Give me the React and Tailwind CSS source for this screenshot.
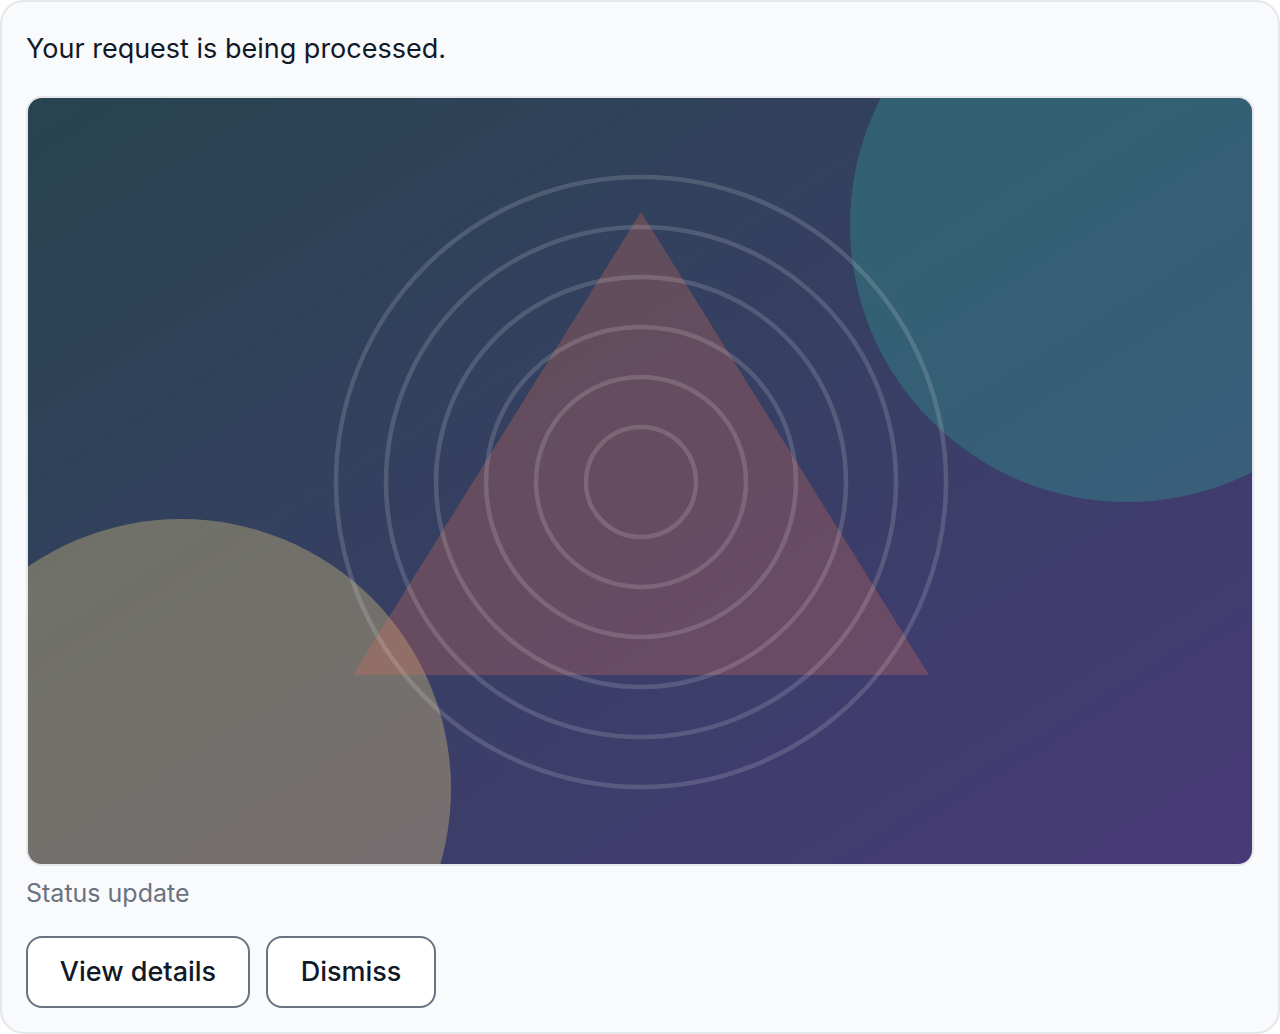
export default function App() {
  const rings = [55, 105, 155, 205, 255, 305];
  return (
    <div className="w-[1280px] h-[1034px] bg-[#f9fafb] border-2 border-[#e5e7eb] rounded-[24px] px-[24px] pt-[25px] flex flex-col font-['Inter',sans-serif]">
      <p className="text-[27px] leading-[44px] text-[#111827]">Your request is being processed.</p>
      <div className="mt-[25px] h-[770px] border-2 border-[#e5e7eb] rounded-[16px] overflow-hidden">
        <svg viewBox="0 0 1224 766" className="block w-full h-full" preserveAspectRatio="none">
          <defs>
            <linearGradient id="bg" x1="0" y1="0" x2="1" y2="1">
              <stop offset="0" stopColor="#27444f" />
              <stop offset="1" stopColor="#483a78" />
            </linearGradient>
          </defs>
          <rect width="1224" height="766" fill="url(#bg)" />
          <circle cx="1099" cy="127" r="277" fill="#2f9a94" fillOpacity="0.36" />
          <circle cx="153" cy="691" r="270" fill="#d4c07c" fillOpacity="0.38" />
          <polygon points="613,114 325,577 901,577" fill="#e0705a" fillOpacity="0.28" />
          {rings.map((r) => (
            <circle key={r} cx="613" cy="384" r={r} fill="none" stroke="#ffffff" strokeOpacity="0.15" strokeWidth="4.5" />
          ))}
        </svg>
      </div>
      <p className="mt-[9px] text-[25px] leading-[36px] text-[#6b7280]">Status update</p>
      <div className="mt-[25px] flex gap-[16px]">
        <button className="h-[72px] w-[224px] bg-white border-2 border-[#6b7280] rounded-[16px] text-[27px] font-medium text-[#111827]">View details</button>
        <button className="h-[72px] w-[170px] bg-white border-2 border-[#6b7280] rounded-[16px] text-[27px] font-medium text-[#111827]">Dismiss</button>
      </div>
    </div>
  );
}
